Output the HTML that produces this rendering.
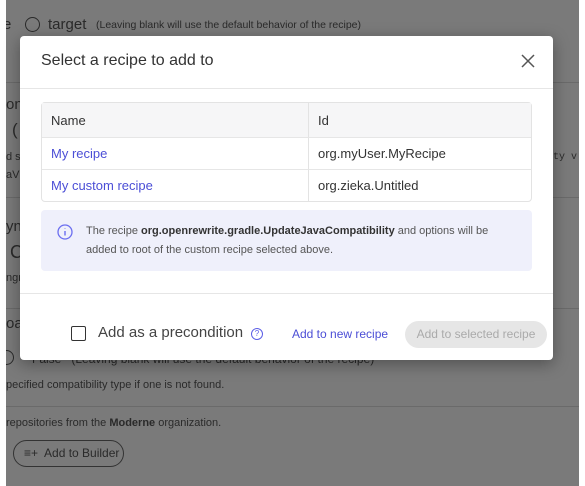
<!DOCTYPE html>
<html><head><style>
body{margin:0;width:585px;height:486px;overflow:hidden;background:#fff;font-family:"Liberation Sans",sans-serif;position:relative}
.bg{position:absolute;left:6px;top:0;width:573px;height:486px;background:#7a7a7a;color:#2a2a2a;overflow:hidden}
.t{position:absolute;white-space:nowrap}
.line{position:absolute;left:0;right:0;height:1px;background:#6a6a6a}
.modal{position:absolute;left:20px;top:36px;width:533px;height:324px;background:#fff;border-radius:4px;box-shadow:0 4px 16px rgba(0,0,0,.35)}
.hdr{position:absolute;left:0;top:0;right:0;height:52px;border-bottom:1px solid #e6e6e6}
table{position:absolute;left:21px;top:66px;width:491px;border-collapse:separate;border-spacing:0;border:1px solid #e3e3e3;border-radius:4px;font-size:13px}
td{height:31px;border-top:1px solid #e6e6e6;padding:0 0 0 9px}
tr:first-child td{border-top:none;background:#f6f6f7;height:34px;color:#333}
td.a{color:#4b4ed6}
td.b{border-left:1px solid #e3e3e3;color:#333}
.info{position:absolute;left:21px;top:174px;width:491px;height:61px;background:#eff0fb;border-radius:4px;font-size:11px;color:#555;line-height:19px}
.foot{position:absolute;left:0;right:0;top:257px;border-top:1px solid #e6e6e6}
</style></head><body>
<div class="bg">
<div class="t" style="left:-3px;top:16px;font-size:15px">e</div>
<div class="t" style="left:19px;top:17px;width:13px;height:13px;border:1.5px solid #2a2a2a;border-radius:50%"></div>
<div class="t" style="left:42px;top:16px;font-size:15px">target</div>
<div class="t" style="left:90px;top:19px;font-size:10.5px">(Leaving blank will use the default behavior of the recipe)</div>
<div class="line" style="top:82px"></div>
<div class="t" style="left:0;top:96px;font-size:15px">on</div>
<div class="t" style="left:6px;top:120px;font-size:17px">(</div>
<div class="t" style="left:0;top:151px;font-size:11px">d s</div>
<div class="t" style="left:0;top:169px;font-size:11px">aV</div>
<div class="line" style="top:197px"></div>
<div class="t" style="left:0;top:218px;font-size:15px">yn</div>
<div class="t" style="left:4px;top:242px;font-size:18px">C</div>
<div class="t" style="left:0;top:272px;font-size:11px">ngr</div>
<div class="line" style="top:308px"></div>
<div class="t" style="left:0;top:315px;font-size:15px">oat</div>
<div class="t" style="left:-7px;top:350px;width:13px;height:13px;border:1.5px solid #2a2a2a;border-radius:50%"></div>
<div class="t" style="left:26px;top:352px;font-size:12px">False &nbsp;&nbsp;(Leaving blank will use the default behavior of the recipe)</div>
<div class="t" style="left:0;top:379px;font-size:11px">pecified compatibility type if one is not found.</div>
<div class="line" style="top:406px"></div>
<div class="t" style="left:0;top:417px;font-size:11px">repositories from the <b>Moderne</b> organization.</div>
<div class="t" style="left:7px;top:440px;width:109px;height:25px;border:1px solid #333;border-radius:14px;font-size:12px;line-height:25px"><span style="margin-left:10px">≡+</span>&nbsp; Add to Builder</div>
<div class="t" style="left:541px;top:152px;font-size:10px;font-family:'Liberation Mono',monospace">ity v</div>
</div>
<div class="modal">
<div class="hdr">
<div class="t" style="left:21px;top:16px;font-size:16px;color:#333">Select a recipe to add to</div>
<svg class="t" style="left:501px;top:18px" width="14" height="14" viewBox="0 0 14 14"><path d="M1 1L13 13M13 1L1 13" stroke="#555" stroke-width="1.5"/></svg>
</div>
<table>
<tr><td style="width:257px">Name</td><td class="b">Id</td></tr>
<tr><td class="a">My recipe</td><td class="b">org.myUser.MyRecipe</td></tr>
<tr><td class="a">My custom recipe</td><td class="b">org.zieka.Untitled</td></tr>
</table>
<div class="info">
<svg class="t" style="left:16px;top:14px" width="16" height="16" viewBox="0 0 16 16"><circle cx="8" cy="8" r="7" fill="none" stroke="#6b6ef0" stroke-width="1.3"/><path d="M8 7v4.5M8 4.5v.5" stroke="#6b6ef0" stroke-width="1.4"/></svg>
<div class="t" style="left:45px;top:12px">The recipe <b style="color:#333">org.openrewrite.gradle.UpdateJavaCompatibility</b> and options will be<br>added to root of the custom recipe selected above.</div>
</div>
<div class="foot"></div>
<div class="t" style="left:51px;top:290px;width:13px;height:13px;border:1.5px solid #333;border-radius:2px"></div>
<div class="t" style="left:78px;top:288px;font-size:15px;color:#444">Add as a precondition</div>
<div class="t" style="left:231px;top:292px;width:10px;height:10px;border:1px solid #5b5ee6;border-radius:50%;font-size:8px;line-height:10px;text-align:center;color:#5b5ee6">?</div>
<div class="t" style="left:272px;top:291px;font-size:12px;color:#4b4ed6">Add to new recipe</div>
<div class="t" style="left:385px;top:285px;width:142px;height:27px;background:#e6e6e6;border-radius:14px;font-size:12px;line-height:27px;text-align:center;color:#aaa">Add to selected recipe</div>
</div>
</body></html>
